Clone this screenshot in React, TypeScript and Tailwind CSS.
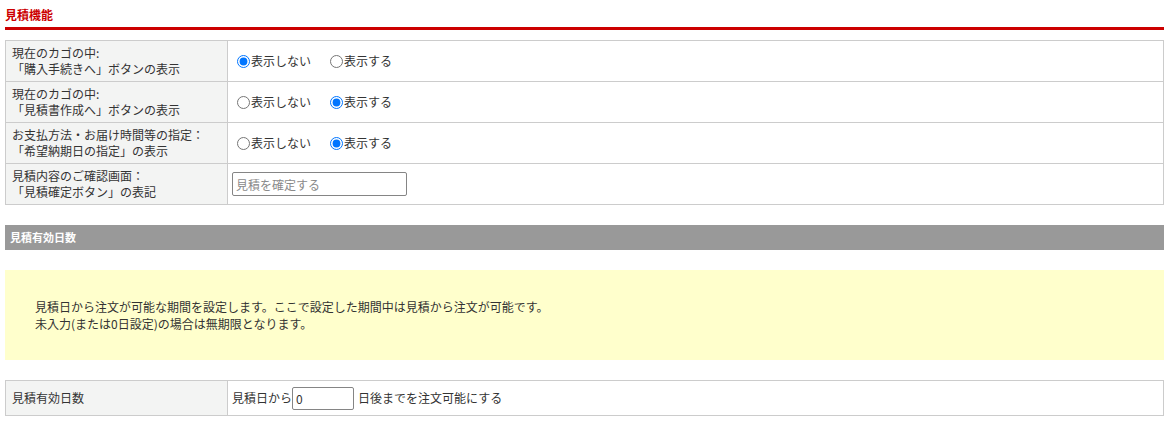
import React from "react";

const font = { fontFamily: '"Noto Sans CJK JP", "Noto Sans", sans-serif' };

type RadioRowProps = {
    name: string;
    label: string[];
    checked: "hide" | "show";
};

const RadioRow = ({ name, label, checked }: RadioRowProps) => {
    return (
        <div className="flex h-[41px] border-t border-[#cccccc]">
            <div className="w-[222px] shrink-0 flex items-center bg-[#f3f4f3] border-r border-[#cccccc] pl-[6px] leading-[16px]">
                <p>{label[0]}<br />{label[1]}</p>
            </div>
            <div className="flex-1 flex items-center pl-[9px]">
                <label className="flex items-center mr-[19px]">
                    <input type="radio" name={name} defaultChecked={checked === "hide"} className="w-[13px] h-[13px] mr-[1px]" />
                    <span>表示しない</span>
                </label>
                <label className="flex items-center">
                    <input type="radio" name={name} defaultChecked={checked === "show"} className="w-[13px] h-[13px] mr-[1px]" />
                    <span>表示する</span>
                </label>
            </div>
        </div>
    );
};

export default function App() {
    return (
        <div className="pl-[5px] pr-[8px] text-[12px] text-[#333333] bg-white min-h-[425px]" style={font}>
            <h2 className="pt-[6px] pb-[3px] leading-[18px] text-[12px] font-bold text-[#cc0000] border-b-[3px] border-[#cc0000]">見積機能</h2>

            <div className="mt-[10px] border-x border-b border-[#cccccc]">
                <RadioRow name="cart_buy" label={["現在のカゴの中:", "「購入手続きへ」ボタンの表示"]} checked="hide" />
                <RadioRow name="cart_estimate" label={["現在のカゴの中:", "「見積書作成へ」ボタンの表示"]} checked="show" />
                <RadioRow name="delivery" label={["お支払方法・お届け時間等の指定：", "「希望納期日の指定」の表示"]} checked="show" />
                <div className="flex h-[41px] border-t border-[#cccccc]">
                    <div className="w-[222px] shrink-0 flex items-center bg-[#f3f4f3] border-r border-[#cccccc] pl-[6px] leading-[16px]">
                        <p>見積内容のご確認画面：<br />「見積確定ボタン」の表記</p>
                    </div>
                    <div className="flex-1 flex items-center pl-[4px]">
                        <input type="text" placeholder="見積を確定する" className="w-[175px] h-[24px] border border-[#858585] rounded-[2px] px-[3px] text-[12px] placeholder:text-[#8a8a8a] outline-none" style={font} />
                    </div>
                </div>
            </div>

            <div className="mt-[20px] h-[25px] bg-[#999999] flex items-center pl-[5px] text-white font-bold text-[11px]">見積有効日数</div>

            <div className="mt-[20px] bg-[#ffffcc] px-[30px] py-[28px] leading-[17px]">
                <p>見積日から注文が可能な期間を設定します。ここで設定した期間中は見積から注文が可能です。</p>
                <p>未入力(または0日設定)の場合は無期限となります。</p>
            </div>

            <div className="mt-[20px] border border-[#cccccc] flex h-[36px]">
                <div className="w-[222px] shrink-0 flex items-center bg-[#f3f4f3] border-r border-[#cccccc] pl-[6px]">見積有効日数</div>
                <div className="flex-1 flex items-center pl-[4px]">
                    <span>見積日から</span>
                    <input type="text" defaultValue="0" className="w-[62px] h-[23px] border border-[#858585] rounded-[2px] px-[3px] text-[12px] outline-none" style={font} />
                    <span className="ml-[4px]">日後までを注文可能にする</span>
                </div>
            </div>
        </div>
    );
}
